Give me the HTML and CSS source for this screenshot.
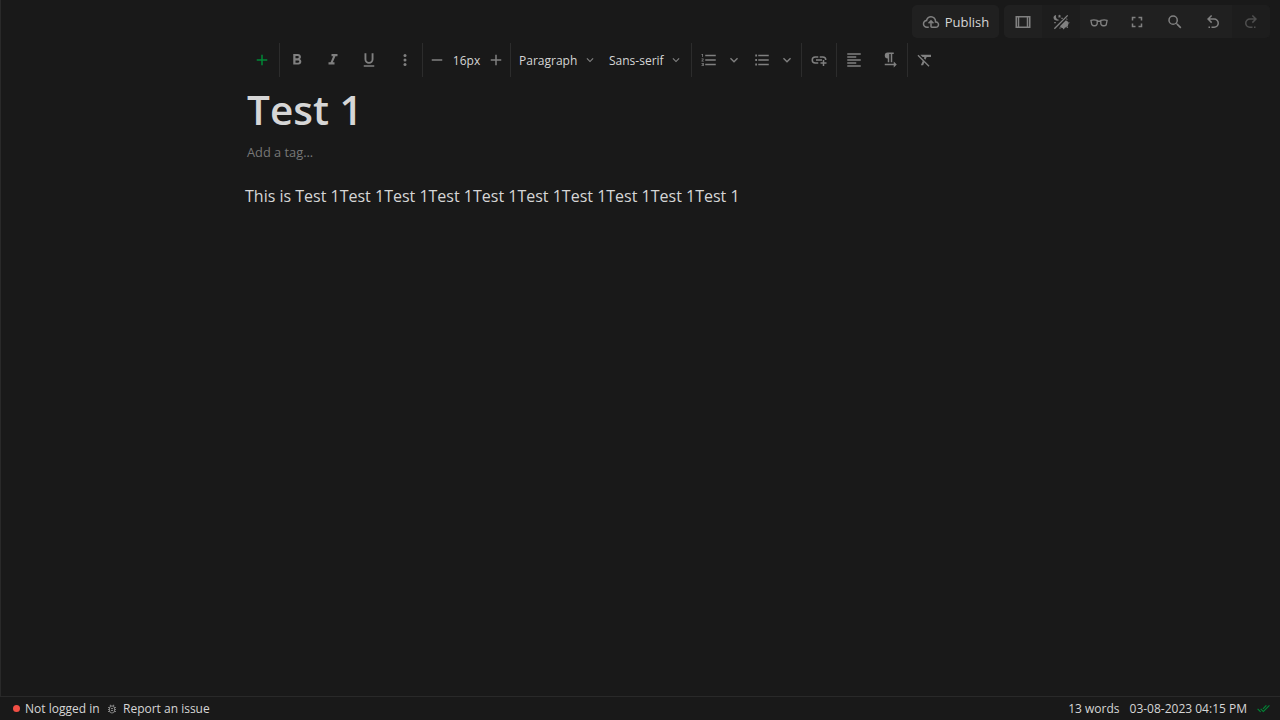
FILE: index.html
```html
<!DOCTYPE html>
<html lang="en">
<head>
<meta charset="utf-8">
<title>Test 1</title>
<link rel="stylesheet" href="styles.css">
</head>
<body>
<div class="app">
  <main class="editor">
    <header class="actions">
      <button class="publish"><svg class="icon" viewBox="0 0 24 24"><path d="M6.5 20Q4.22 20 2.61 18.43 1 16.85 1 14.58 1 12.63 2.17 11.1 3.35 9.57 5.25 9.15 5.88 6.85 7.75 5.43 9.63 4 12 4 14.93 4 16.96 6.04 19 8.07 19 11 20.73 11.2 21.86 12.5 23 13.78 23 15.5 23 17.38 21.69 18.69 20.38 20 18.5 20H13Q12.18 20 11.59 19.41 11 18.83 11 18V12.85L9.4 14.4 8 13 12 9 16 13 14.6 14.4 13 12.85V18H18.5Q19.55 18 20.27 17.27 21 16.55 21 15.5 21 14.45 20.27 13.73 19.55 13 18.5 13H17V11Q17 8.93 15.54 7.46 14.08 6 12 6 9.93 6 8.46 7.46 7 8.93 7 11H6.5Q5.05 11 4.03 12.03 3 13.05 3 14.5 3 15.95 4.03 17 5.05 18 6.5 18H9V20Z"/></svg><span>Publish</span></button>
      <div class="action-group">
        <button class="action"><svg class="icon" viewBox="0 0 24 24"><path fill-rule="evenodd" d="M2 4h20v16H2zM4 6v12h1V6zM7 6v12h10V6zM19 6v12h1V6z"/></svg></button>
        <button class="action dim"><svg class="icon" viewBox="0 0 24 24"><path d="M2.500 20.300 20.300 2.500 21.600 3.800 3.800 21.600zM5.500 2.500C4.500 6 6.500 8.800 10 9.200 6.500 11.500 1.500 9.500 2 5.800 2.300 4 3.800 2.900 5.500 2.500zM10 2l.7 1.400 1.600.2-1.200 1.100.3 1.600L10 5.500l-1.400.8.3-1.600-1.200-1.100 1.600-.2zM12.500 6.200h1.800v1.800h-1.800zM3 12h2v1.800H3zM18.500 9.500a5 5 0 0 1 0 9.500 6 6 0 0 1-8-1.500zM19.500 6.500l1.500 2-2 .5zM22 11.500l1.500 1.500-1.500 1.300zM21 17.500l.5 2.500-2.500-.7zM14 20h3l-1.500 2zM10 19l2 .7-1.700 1.800z"/></svg></button>
        <button class="action"><svg class="icon glasses" viewBox="0 0 20 20"><path class="line" d="M1 7Q4 6 8 7v3.500a2.500 2.500 0 0 1-2.500 2.500H4.200a2.500 2.500 0 0 1-2.500-2.500zM19 7Q16 6 12 7v3.500a2.500 2.500 0 0 0 2.500 2.500h1.300a2.500 2.500 0 0 0 2.500-2.500zM8 8h4"/></svg></button>
        <button class="action"><svg class="icon" viewBox="0 0 24 24"><path d="M5 5H10V7H7V10H5V5M14 5H19V10H17V7H14V5M17 14H19V19H14V17H17V14M10 17V19H5V14H7V17H10Z"/></svg></button>
        <button class="action"><svg class="icon" viewBox="0 0 24 24"><path d="M9.5 3A6.5 6.5 0 0 1 16 9.500C16 11.110 15.410 12.590 14.440 13.730L14.710 14H15.500L20.500 19 19 20.500 14 15.500V14.710L13.730 14.440C12.590 15.410 11.110 16 9.500 16A6.500 6.500 0 0 1 9.500 3M9.500 5A4.500 4.500 0 1 0 9.500 14 4.500 4.500 0 0 0 9.500 5Z"/></svg></button>
        <button class="action"><svg class="icon" viewBox="0 0 24 24"><path d="M13.500 7A6.500 6.500 0 0 1 20 13.500 6.500 6.500 0 0 1 13.500 20H10V18H13.500C16 18 18 16 18 13.500S16 9 13.500 9H7.830L10.910 12.090 9.500 13.500 4 8 9.500 2.500 10.920 3.910 7.830 7H13.500M6 18H8V20H6V18Z"/></svg></button>
        <button class="action dim disabled"><svg class="icon" viewBox="0 0 24 24"><path d="M10.500 7A6.500 6.500 0 0 0 4 13.500 6.500 6.500 0 0 0 10.500 20H14V18H10.500C8 18 6 16 6 13.500S8 9 10.500 9H16.170L13.090 12.090 14.500 13.500 20 8 14.500 2.500 13.080 3.910 16.170 7H10.500M18 18H16V20H18V18Z"/></svg></button>
      </div>
    </header>
    <nav class="toolbar">
      <div class="tools">
        <button class="tool add"><svg class="icon" viewBox="0 0 24 24"><path d="M19 13H13V19H11V13H5V11H11V5H13V11H19V13Z"/></svg></button>
      </div>
      <div class="tools">
        <button class="tool"><svg class="icon" viewBox="0 0 24 24"><path d="M13.500 15.500H10V12.500H13.500A1.500 1.500 0 0 1 13.500 15.500M10 6.500H13A1.500 1.500 0 0 1 13 9.500H10M15.600 10.790C16.570 10.110 17.250 9 17.250 8 17.250 5.740 15.500 4 13.250 4H7V18H14.040C16.140 18 17.750 16.300 17.750 14.210 17.750 12.690 16.890 11.390 15.600 10.790Z"/></svg></button>
        <button class="tool"><svg class="icon" viewBox="0 0 24 24"><path d="M10 4V7H12.210L8.790 15H6V18H14V15H11.790L15.210 7H18V4H10Z"/></svg></button>
        <button class="tool"><svg class="icon" viewBox="0 0 24 24"><path d="M5 21H19V19H5V21M12 17A6 6 0 0 0 18 11V3H15.500V11A3.500 3.500 0 0 1 8.500 11V3H6V11A6 6 0 0 0 12 17Z"/></svg></button>
        <button class="tool"><svg class="icon" viewBox="0 0 24 24"><circle cx="12" cy="6" r="2"/><circle cx="12" cy="12" r="2"/><circle cx="12" cy="18" r="2"/></svg></button>
      </div>
      <div class="tools stepper">
        <button class="tool step"><svg class="icon" viewBox="0 0 24 24"><path d="M19 13H5V11H19Z"/></svg></button>
        <span class="size">16px</span>
        <button class="tool step"><svg class="icon" viewBox="0 0 24 24"><path d="M19 13H13V19H11V13H5V11H11V5H13V11H19V13Z"/></svg></button>
      </div>
      <div class="tools selects">
        <button class="select"><span class="paragraph">Paragraph</span><svg class="chevron" viewBox="0 0 24 24"><path d="M7.410 8.580 12 13.170 16.590 8.580 18 10 12 16 6 10Z"/></svg></button>
        <button class="select"><span class="family">Sans-serif</span><svg class="chevron" viewBox="0 0 24 24"><path d="M7.410 8.580 12 13.170 16.590 8.580 18 10 12 16 6 10Z"/></svg></button>
      </div>
      <div class="tools lists">
        <div class="split"><button class="tool"><svg class="icon" viewBox="0 0 24 24"><path d="M7 13V11H21V13H7M7 19V17H21V19H7M7 7V5H21V7H7M3 8V5H2V4H4V8H3M2 17V16H5V20H2V19H4V18.500H3V17.500H4V17H2M4.250 10A.75.75 0 0 1 5 10.750C5 10.950 4.920 11.140 4.790 11.270L3.120 13H5V14H2V13.080L4 11H2V10H4.250Z"/></svg></button><button class="drop"><svg class="icon" viewBox="0 0 24 24"><path d="M7.410 8.580 12 13.170 16.590 8.580 18 10 12 16 6 10Z"/></svg></button></div>
        <div class="split"><button class="tool"><svg class="icon" viewBox="0 0 24 24"><path d="M7 5H21V7H7V5M7 13V11H21V13H7M7 19V17H21V19H7M3 4.800h2.400v2.400H3zM3 10.800h2.400v2.400H3zM3 16.800h2.400v2.400H3z"/></svg></button><button class="drop"><svg class="icon" viewBox="0 0 24 24"><path d="M7.410 8.580 12 13.170 16.590 8.580 18 10 12 16 6 10Z"/></svg></button></div>
      </div>
      <div class="tools">
        <button class="tool"><svg class="icon" viewBox="0 0 24 24"><path d="M7 7H11V9H7A3 3 0 0 0 7 15H11V17H7A5 5 0 0 1 7 7M17 7A5 5 0 0 1 22 12H20A3 3 0 0 0 17 9H13V7H17M8 11H16V13H8V11M17 12H19V15H22V17H19V20H17V17H14V15H17V12Z"/></svg></button>
      </div>
      <div class="tools">
        <button class="tool"><svg class="icon" viewBox="0 0 24 24"><path d="M3 3H21V5H3V3M3 7H15V9H3V7M3 11H21V13H3V11M3 15H15V17H3V15M3 19H21V21H3V19Z"/></svg></button>
        <button class="tool"><svg class="icon" viewBox="0 0 24 24"><path d="M21 18 17 14V17H5V19H17V22M9 10V15H11V4H13V15H15V4H17V2H9A4 4 0 0 0 9 10Z"/></svg></button>
      </div>
      <div class="tools">
        <button class="tool"><svg class="icon" viewBox="0 0 24 24"><path d="M6 5V5.180L8.820 8H11.220L10.500 9.680 12.600 11.780 14.210 8H20V5H6M3.270 5 2 6.270 8.970 13.240 6.500 19H9.500L11.070 15.340 16.730 21 18 19.730 3.550 5.270 3.270 5Z"/></svg></button>
      </div>
    </nav>
    <article class="note">
      <h1 class="title">Test 1</h1>
      <div class="tag">Add a tag...</div>
      <p class="body">This is Test 1Test 1Test 1Test 1Test 1Test 1Test 1Test 1Test 1Test 1</p>
    </article>
  </main>
  <footer class="status">
    <span class="dot"></span>
    <span class="login">Not logged in</span>
    <svg class="bug" viewBox="0 0 24 24"><path fill-rule="evenodd" d="M20 8H17.190C16.740 7.200 16.120 6.500 15.370 6L17 4.410 15.590 3 13.420 5.170Q12 4.830 10.590 5.170L8.410 3 7 4.410 8.620 6C7.880 6.500 7.260 7.200 6.810 8H4V10H6.090L6 11V12H4V14H6V15L6.090 16H4V18H6.810A6 6 0 0 0 17.190 18H20V16H17.910L18 15V14H20V12H18V11L17.910 10H20V8M16 15A4 4 0 0 1 8 15V11A4 4 0 0 1 16 11V15M10 10H14V12H10zM10 14H14V16H10z"/></svg>
    <span>Report an issue</span>
    <span class="words">13 words</span>
    <span class="date">03-08-2023 04:15 PM</span>
    <svg class="saved" viewBox="0 0 24 24"><path d="M.410 13.410 6 19 7.410 17.580 1.830 12M22.240 5.580 11.660 16.170 7.500 12 6.070 13.410 11.660 19 23.660 7M18 7 16.590 5.580 10.240 11.930 11.660 13.340 18 7Z"/></svg>
  </footer>
</div>
</body>
</html>
```
FILE: styles.css
```css
* { box-sizing: border-box; }
body {
  margin: 0;
  background: #191919;
  color: #d6d6d6;
  font: 12px/18px "Open Sans", "Noto Sans", sans-serif;
}
button {
  display: flex;
  align-items: center;
  justify-content: center;
  margin: 0;
  padding: 0;
  border: 0;
  background: none;
  color: inherit;
  font: inherit;
}
.app { display: flex; flex-direction: column; width: 1280px; height: 720px; overflow: hidden; }
.editor { flex: 1; border-left: 1px solid #292929; }
.icon { width: 18px; height: 18px; flex: none; fill: #808080; display: block; }
.line { fill: none; stroke: #808080; stroke-width: 1.5; stroke-linejoin: round; }

.actions { display: flex; justify-content: flex-end; gap: 5px; padding: 5px 10px 0 0; height: 43px; }
.publish { width: 87px; height: 33px; gap: 5px; border-radius: 5px; background: #202020; font-size: 13px; }
.action-group { display: flex; height: 33px; border-radius: 5px; overflow: hidden; background: #202020; }
.action { width: 38px; }
.action.dim { background: #1d1d1d; }
.disabled .icon { opacity: .5; }
.glasses { margin-top: 2px; }

.toolbar { display: flex; height: 34px; padding-left: 244px; }
.tools { display: flex; gap: 2px; border-right: 1px solid #2c2c2c; }
.tools:last-child { border-right: 0; }
.tool { width: 34px; height: 34px; }
.add .icon { fill: #008837; }
.stepper { width: 88px; gap: 0; align-items: center; }
.step { width: 28px; }
.size { width: 32px; text-align: center; padding-top: 1px; }
.selects { width: 181px; padding-left: 8px; gap: 12px; }
.select { gap: 4px; }
.select span { padding-top: 1px; white-space: nowrap; }
.paragraph { width: 60px; text-align: left; }
.family { width: 56px; text-align: left; }
.chevron { width: 14px; height: 14px; fill: #808080; }
.lists { width: 110px; gap: 3px; }
.split { display: flex; }
.drop { width: 16px; }
.drop .icon { width: 16px; height: 16px; }

.note { padding: 4px 0 0 244px; }
.title { margin: 0; padding-left: 2px; font-size: 40.5px; line-height: 58px; font-weight: 600; }
.tag { padding: 4px 0 0 2px; color: #777; font-size: 12.8px; }
.body { margin: 23px 0 0; font-size: 16px; line-height: 24px; }

.status { display: flex; align-items: center; height: 24px; padding: 0 10px 0 13px; border-top: 1px solid #292929; }
.dot { width: 7px; height: 7px; border-radius: 50%; background: #f14f45; margin-right: 5px; }
.login { width: 75px; white-space: nowrap; }
.bug { width: 12px; height: 12px; margin: 1px 5px 0 6px; fill: #808080; }
.words { margin-left: auto; }
.date { margin: 0 10px; }
.saved { width: 13px; height: 13px; fill: #008837; }
```
